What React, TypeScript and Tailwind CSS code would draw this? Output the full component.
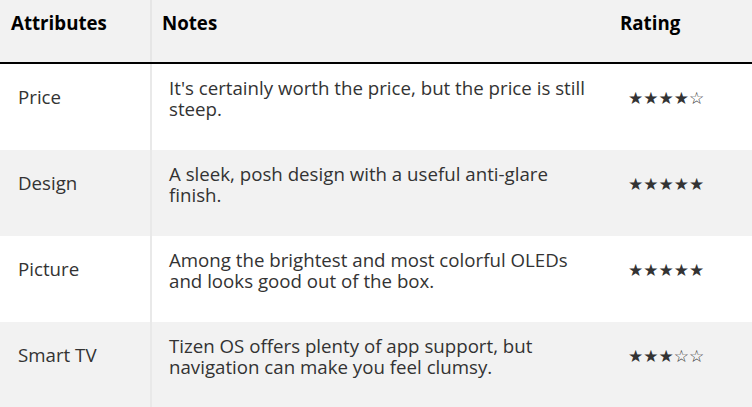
import React from "react";

interface Row {
  attribute: string;
  note: string;
  stars: number;
}

const rows: Row[] = [
  {
    attribute: "Price",
    note: "It's certainly worth the price, but the price is still steep.",
    stars: 4,
  },
  {
    attribute: "Design",
    note: "A sleek, posh design with a useful anti-glare finish.",
    stars: 5,
  },
  {
    attribute: "Picture",
    note: "Among the brightest and most colorful OLEDs and looks good out of the box.",
    stars: 5,
  },
  {
    attribute: "Smart TV",
    note: "Tizen OS offers plenty of app support, but navigation can make you feel clumsy.",
    stars: 3,
  },
];

const Stars: React.FC<{ count: number }> = ({ count }) => (
  <span className="font-['DejaVu_Sans',sans-serif] text-[17px] text-[#333]">
    {"★".repeat(count)}
    {"☆".repeat(5 - count)}
  </span>
);

export default function App() {
  return (
    <div className="w-[752px] h-[407px] overflow-hidden bg-white font-['Open_Sans',sans-serif]">
      <div className="grid grid-cols-[152px_458px_142px]">
        <div className="h-[62px] bg-[#f2f2f2] border-r-2 border-[#e6e6e6] pl-[11px] pt-[9px] text-[18.7px] font-bold text-black">
          Attributes
        </div>
        <div className="h-[62px] bg-[#f2f2f2] pl-[10px] pt-[9px] text-[18.7px] font-bold text-black">
          Notes
        </div>
        <div className="h-[62px] bg-[#f2f2f2] pl-[10px] pt-[9px] text-[18.7px] font-bold text-black">
          Rating
        </div>
        <div className="col-span-3 h-[2px] bg-black" />
        {rows.map((row, i) => {
          const bg = i % 2 === 1 ? "bg-[#f2f2f2]" : "bg-white";
          return (
            <React.Fragment key={row.attribute}>
              <div
                className={`${bg} h-[86px] flex items-center border-r-2 border-[#e9e9e9] pl-[18px] pb-[19px] text-[18.7px] text-[#333]`}
              >
                {row.attribute}
              </div>
              <div
                className={`${bg} h-[86px] flex items-center pl-[17px] pr-[20px] pb-[19px] text-[18.7px] leading-[21px] text-[#333]`}
              >
                {row.note}
              </div>
              <div className={`${bg} h-[86px] flex items-center pl-[18px] pb-[16px]`}>
                <Stars count={row.stars} />
              </div>
            </React.Fragment>
          );
        })}
      </div>
    </div>
  );
}
